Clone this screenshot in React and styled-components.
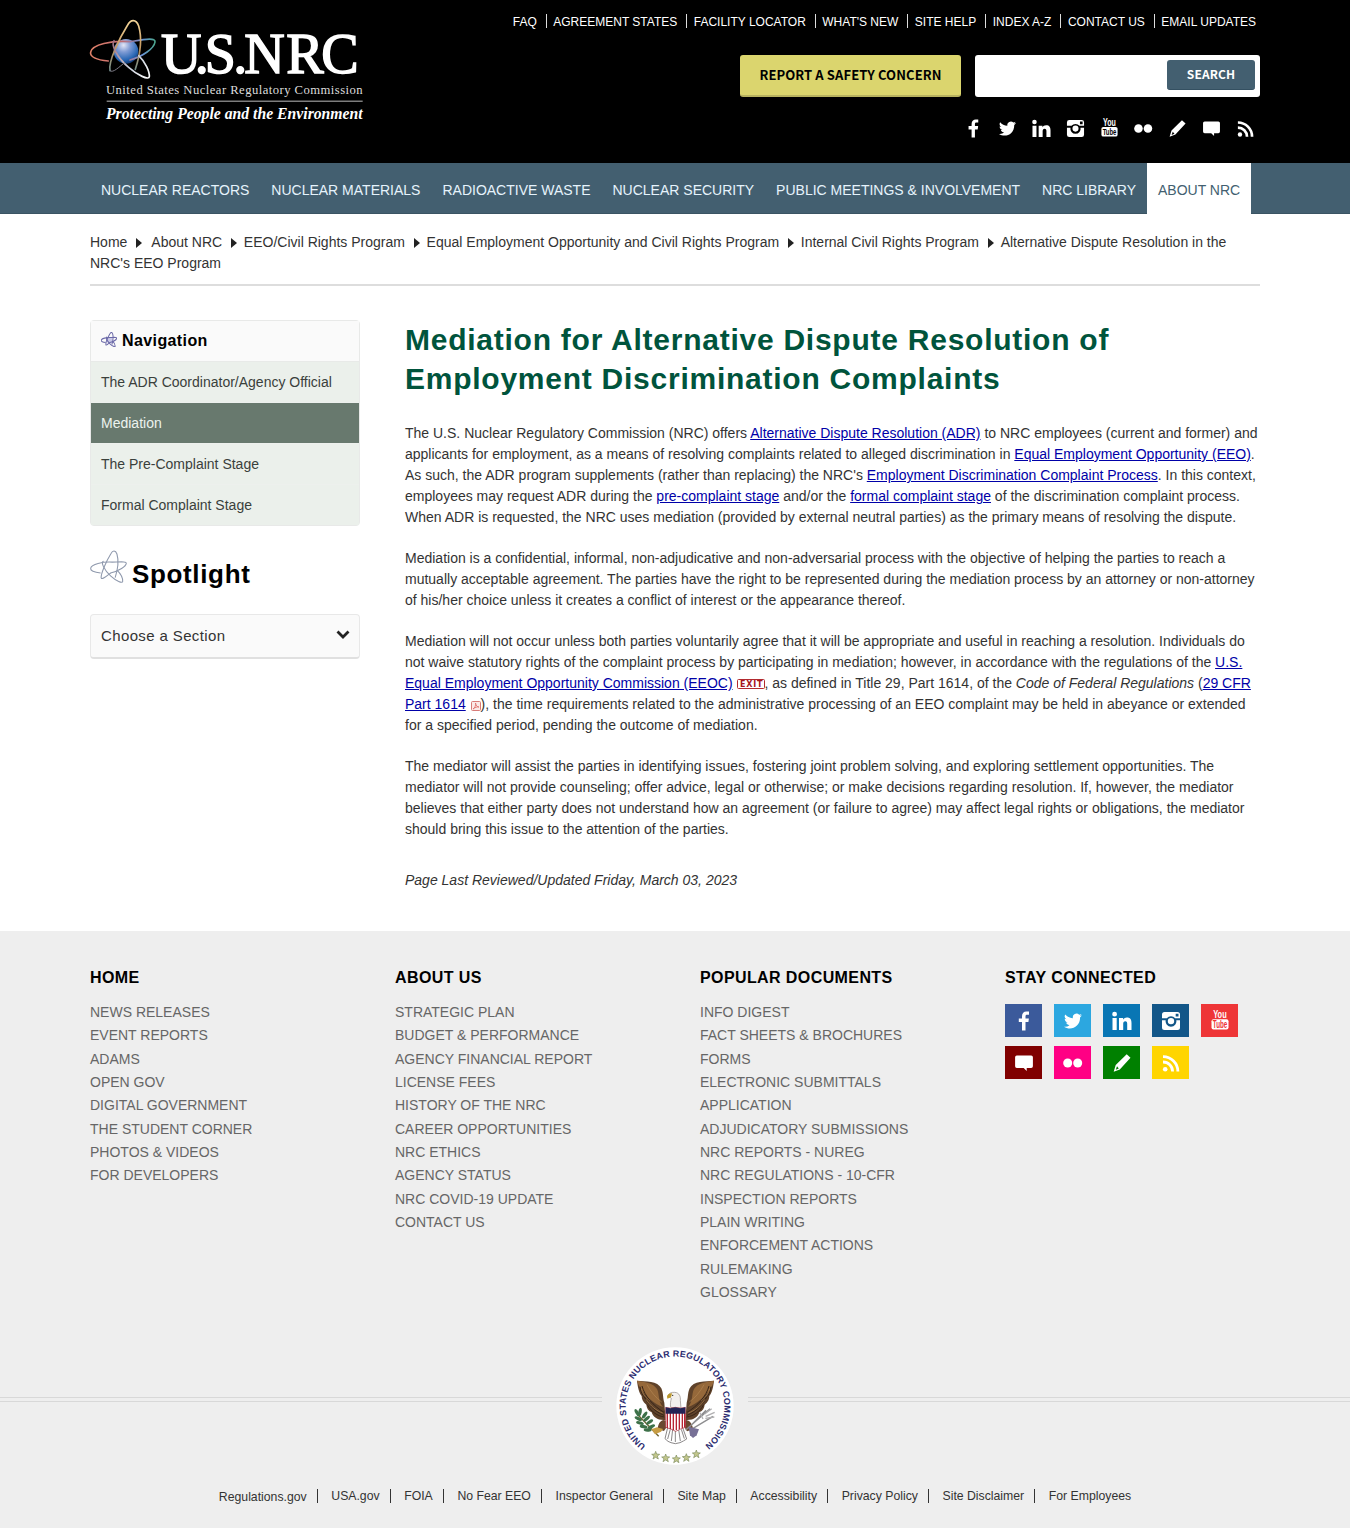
import React, { useId } from "react";
import styled, { createGlobalStyle } from "styled-components";

const GlobalStyle = createGlobalStyle`
  * { box-sizing: border-box; }
  body { margin: 0; background: #fff; color: #333; font: 14px/21px "Liberation Sans", Arial, sans-serif; }
  ul { list-style: none; margin: 0; padding: 0; }
  a { color: inherit; text-decoration: none; }
  svg { display: block; }
`;

const Container = styled.div`
  width: 1170px;
  margin: 0 auto;
`;

/* ---------- header ---------- */

const Header = styled.header`
  background: #000;
  height: 163px;
`;

const HeaderInner = styled(Container)`
  display: flex;
  justify-content: space-between;
`;

const LogoLink = styled.a`
  margin: 10px 0 0 -10px;
`;

const HeaderTools = styled.div`
  display: flex;
  flex-direction: column;
  align-items: flex-end;
`;

const UtilityNav = styled.ul`
  display: flex;
  padding: 14px 4px 0 0;
  color: #fff;
  font-size: 12px;
  line-height: 16px;
`;

const UtilityItem = styled.li`
  display: flex;
  white-space: nowrap;
  &:not(:last-child)::after {
    content: "";
    width: 1px;
    height: 14px;
    margin: 0 6.500px 0 9px;
    background: #ddd;
  }
`;

const ActionRow = styled.div`
  display: flex;
  gap: 14px;
  margin-top: 25px;
`;

const ReportButton = styled.a`
  width: 221px;
  height: 42px;
  border-radius: 3px;
  border-bottom: 2px solid #b7b25f;
  background: #dbd56e;
  color: #000;
  font: 700 13px/40px "Noto Sans CJK SC", sans-serif;
  letter-spacing: 0.1px;
  text-align: center;
  white-space: nowrap;
`;

const SearchBox = styled.form`
  display: flex;
  width: 285px;
  height: 42px;
  padding: 5px;
  border-radius: 3px;
  background: #fff;
`;

const SearchInput = styled.input`
  flex: 1;
  min-width: 0;
  border: 0;
  outline: 0;
  background: transparent;
`;

const SearchButton = styled.button`
  width: 88px;
  height: 30px;
  padding: 0 0 2px;
  border: 0;
  border-bottom: 1px solid #345061;
  border-radius: 3px;
  background: #435f70;
  color: #fff;
  font: 700 12px/27px "Noto Sans CJK SC", sans-serif;
  letter-spacing: 0.1px;
`;

const HeaderSocial = styled.div`
  display: flex;
  margin: 19px -2px 0 0;
`;

const HeaderSocialLink = styled.a`
  display: grid;
  place-items: center;
  width: 34px;
  height: 24px;
  color: #fff;
`;

/* ---------- main navigation ---------- */

const MainNav = styled.nav`
  height: 51px;
  background: #435f70;
  border-bottom: 1px solid #3a5463;
`;

const MainNavList = styled(Container).attrs({ as: "ul" })`
  display: flex;
`;

const MainNavLink = styled.a`
  display: block;
  height: 51px;
  padding: 0 11px;
  line-height: 54px;
  white-space: nowrap;
  color: ${(p) => (p.$active ? "#435f70" : "#e6f3fc")};
  background: ${(p) => (p.$active ? "#fff" : "transparent")};
`;

const Breadcrumb = styled(Container)`
  height: 72px;
  padding-top: 18px;
  border-bottom: 2px solid #ddd;
`;

const CrumbArrow = styled.span`
  display: inline-block;
  width: ${(p) => p.$width || 21.7}px;
  padding-left: 8.600px;
  svg { display: inline-block; vertical-align: -1px; }
`;

/* ---------- page body ---------- */

const Body = styled(Container)`
  display: flex;
  align-items: flex-start;
  gap: 45px;
  height: 645px;
  padding-top: 34px;
`;

const Sidebar = styled.aside`
  width: 270px;
`;

const SideMenu = styled.nav`
  border: 1px solid #e8e9e8;
  border-radius: 4px;
  background: #ebf0eb;
`;

const SideTitle = styled.h2`
  display: flex;
  gap: 5px;
  height: 41px;
  margin: 0;
  padding: 11px 10px 0;
  border-bottom: 1px solid #e8eae8;
  background: #fafafa;
  color: #000;
  font-size: 16px;
  line-height: 18px;
  letter-spacing: 0.025em;
`;

const SideLink = styled.a`
  display: block;
  height: 41px;
  padding: 0 10px;
  line-height: 41px;
  color: ${(p) => (p.$active ? "#ecf3ee" : "#3a403c")};
  background: ${(p) => (p.$active ? "#68796e" : "#ebf0eb")};
  border-bottom: 1px solid #edf0ed;
  &:last-child { height: 40px; border-bottom: 0; }
`;

const SpotlightTitle = styled.h2`
  display: flex;
  gap: 5px;
  height: 40px;
  margin: 24px 0 0;
  color: #000;
  font-size: 26px;
  line-height: 30px;
  letter-spacing: 0.025em;
  span { padding-top: 9px; }
`;

const SectionSelect = styled.button`
  display: flex;
  align-items: center;
  justify-content: space-between;
  width: 100%;
  height: 45px;
  margin-top: 24px;
  padding: 0 9px 2px 10px;
  border: 1px solid #e8e8e8;
  border-bottom: 2px solid #e0e0e0;
  border-radius: 4px;
  background: #fafafa;
  color: #333;
  font: 15px "Liberation Sans", Arial, sans-serif;
  letter-spacing: 0.025em;
`;

const Article = styled.main`
  width: 855px;
  p { margin: 0 0 20px; }
  p a { color: #0000a8; text-decoration: underline; }
`;

const PageTitle = styled.h1`
  margin: 0 0 25px;
  color: #00543c;
  font-size: 30px;
  line-height: 39px;
  letter-spacing: 0.025em;
`;

const Reviewed = styled.div`
  padding-top: 10px;
  font-style: italic;
`;

const ExitBadge = styled.span`
  display: inline-block;
  width: 27px;
  height: 10px;
  margin-left: 1px;
  vertical-align: -1px;
  svg { overflow: visible; }
`;

const PdfBadge = styled.span`
  display: inline-block;
  width: 10px;
  height: 10px;
  margin-left: 1px;
  vertical-align: -2px;
`;

/* ---------- footer ---------- */

const Footer = styled.footer`
  height: 597px;
  background: #eee;
`;

const FooterColumns = styled(Container)`
  display: grid;
  grid-template-columns: repeat(3, 305px) 255px;
  height: 417px;
  padding-top: 37px;
`;

const FooterHeading = styled.h3`
  margin: 0 0 13px;
  color: #000;
  font-size: 16px;
  line-height: 20px;
  letter-spacing: 0.025em;
`;

const FooterLink = styled.a`
  display: block;
  color: #666;
  line-height: 23.330px;
`;

const SocialGrid = styled.div`
  display: grid;
  grid-template-columns: repeat(5, 37px);
  gap: 9px 12px;
  margin-top: 16px;
`;

const SocialTile = styled.a`
  display: grid;
  place-items: center;
  height: 33px;
  color: #fff;
  background: ${(p) => p.$bg};
`;

const SealRow = styled.div`
  display: flex;
  align-items: flex-start;
  height: 116px;
`;

const Rule = styled.div`
  flex: 1;
  height: 5px;
  margin-top: 49px;
  border-top: 1px solid #d8d8d8;
  border-bottom: 1px solid #d8d8d8;
`;

const SealHolder = styled.div`
  width: 146px;
  min-width: 0;
  flex: 0 0 auto;
  svg { margin: -8px -11px 0 -13px; }
`;

const LegalList = styled.ul`
  display: flex;
  justify-content: center;
  margin-top: 24px;
  font-size: 12.250px;
  line-height: 16px;
`;

const LegalItem = styled.li`
  display: flex;
  white-space: nowrap;
  &:first-child a { padding-top: 1px; }
  &:not(:last-child)::after {
    content: "";
    width: 1px;
    height: 14px;
    margin: 1px 13.700px 0 9.900px;
    background: #333;
  }
`;

/* ---------- drawings ---------- */

function AtomOrbits({ stroke, width }) {
  return (
    <g fill="none" stroke={stroke} strokeWidth={width}>
      <path d="M85 153C48 150 27 140 30 126C34 104 95 90 150 93C195 92 229 88 228 100C226 116 190 142 140 153" />
      <path d="M88 180C86 155 118 85 143 45C152 28 168 26 176 48C187 85 180 135 166 178" />
      <path d="M102 88C84 90 102 134 142 170C172 197 207 212 208 200C209 184 196 156 176 137" />
      <path d="M88 180C94 192 125 165 142 152" />
    </g>
  );
}

function AtomIcon({ width, height, stroke, line, fill }) {
  return (
    <svg width={width} height={height} viewBox="26 26 206 182" preserveAspectRatio="none">
      {fill && <circle cx="137" cy="125" r="35" fill={fill} />}
      <AtomOrbits stroke={stroke} width={line} />
    </svg>
  );
}

function Logo() {
  return (
    <svg width="300" height="130" viewBox="0 0 900 390" fill="#fff" fontFamily="Liberation Serif, serif">
      <defs>
        <radialGradient id="core" cx="0.4" cy="0.25" r="0.8">
          <stop offset="0" stopColor="#e4e6f5" />
          <stop offset="0.35" stopColor="#7f9bd4" />
          <stop offset="0.75" stopColor="#2766b4" />
          <stop offset="1" stopColor="#0b2f66" />
        </radialGradient>
        <linearGradient id="orbitA">
          <stop offset="0" stopColor="#e08068" />
          <stop offset="0.5" stopColor="#c06a70" />
          <stop offset="0.8" stopColor="#6b93d8" />
          <stop offset="1" stopColor="#4ba58c" />
        </linearGradient>
        <linearGradient id="orbitB" x1="0" y1="1" x2="0" y2="0">
          <stop offset="0" stopColor="#6f8d8b" />
          <stop offset="0.45" stopColor="#c3965f" />
          <stop offset="1" stopColor="#f6d79a" />
        </linearGradient>
        <linearGradient id="orbitC" x1="0" y1="0" x2="1" y2="1">
          <stop offset="0" stopColor="#9d6a7c" />
          <stop offset="0.6" stopColor="#ccd3df" />
          <stop offset="1" stopColor="#fff" />
        </linearGradient>
      </defs>
      <circle cx="138" cy="124" r="37" fill="url(#core)" />
      <g fill="none" strokeWidth="5" strokeLinecap="round">
        <path d="M85 153C48 150 29 140 32 126C36 104 95 90 150 95C195 88 227 82 225 96C222 116 190 138 150 150" stroke="url(#orbitA)" />
        <path d="M90 182C84 155 118 85 143 45C152 28 168 26 176 48C187 85 180 135 166 178" stroke="url(#orbitB)" />
        <path d="M102 92C92 104 112 144 146 172C172 195 207 212 208 200C209 184 196 156 176 137" stroke="url(#orbitC)" />
        <path d="M90 182C98 192 120 168 134 158" stroke="#7d7a86" strokeWidth="3" />
      </g>
      <g stroke="#fff" strokeWidth="4.500">
        <text x="243 344 374 460 493 619 724" y="188" fontSize="168">U.S.NRC</text>
      </g>
      <text x="78" y="251" fontSize="38" fill="#ddd" textLength="770">United States Nuclear Regulatory Commission</text>
      <rect x="80" y="272" width="768" height="3" fill="#bbb" />
      <text x="78" y="326" fontSize="48" fontWeight="700" fontStyle="italic" textLength="770" lengthAdjust="spacingAndGlyphs">
        Protecting People and the Environment
      </text>
    </svg>
  );
}

const glyphs = {
  facebook: <path d="M8 19.500V11H4.800V7.400H8V5.200C8 2.200 9.800.5 12.400.5c1.300 0 2.300.1 2.600.1v3.200h-1.800c-1.400 0-1.700.7-1.700 1.600v2h3.400l-.5 3.600h-2.900v8.500z" />,
  twitter: <path d="M19 4.300c-.6.3-1.300.5-2.100.6.700-.5 1.300-1.200 1.600-2-.7.4-1.500.7-2.300.9a3.700 3.700 0 0 0-6.300 3.400C6.800 7 4.100 5.600 2.300 3.400a3.700 3.700 0 0 0 1.100 4.900c-.6 0-1.200-.2-1.700-.5 0 1.800 1.300 3.300 3 3.700-.6.1-1.100.2-1.700.1.500 1.500 1.800 2.500 3.500 2.600A7.500 7.500 0 0 1 1 15.700C7.800 20.100 17.200 16 17.100 6.300c.8-.5 1.400-1.200 1.900-2z" />,
  linkedin: <path d="M.5 7h4.200v12H.5zM2.600.8a2.400 2.400 0 1 1 0 4.800 2.400 2.400 0 0 1 0-4.800zM7 7h4v1.700c.6-1.100 2-2.100 3.900-2.100 3.500 0 4.600 2.100 4.600 5.400v7h-4.300v-6.200c0-1.500-.4-2.600-1.900-2.600s-2.100 1.100-2.100 2.600V19H7z" />,
  instagram: <path fillRule="evenodd" d="M3.500 1h13A2.500 2.500 0 0 1 19 3.500v13a2.500 2.500 0 0 1-2.500 2.500h-13A2.500 2.500 0 0 1 1 16.500v-13A2.500 2.500 0 0 1 3.500 1zM14.700 2.700v2.800h2.800V2.700zM1 7.200V9.200h3.700a5.400 5.400 0 1 0 10.600 0H19V7.200h-4.800a5.400 5.400 0 0 0-8.400 0zM10 6.900a3.200 3.200 0 1 1 0 6.400 3.200 3.200 0 0 1 0-6.400z" />,
  flickr: <><circle cx="4.700" cy="10" r="4.500" /><circle cx="14.700" cy="10" r="4.500" /></>,
  pencil: <path fillRule="evenodd" d="M14.700 1.300 18.500 4.800 7.800 16.400 1.700 18.700l2-6.600zM5 13.300l-1.200 3.500 3-1.400z" />,
  comment: <path d="M2.800 2.500h14.400a1.700 1.700 0 0 1 1.700 1.700v9a1.700 1.700 0 0 1-1.700 1.700h-4.500v3L9.700 14.900H2.800a1.700 1.700 0 0 1-1.700-1.700v-9a1.700 1.700 0 0 1 1.700-1.700z" />,
  rss: (
    <g fill="none" stroke="currentColor" strokeWidth="2.800">
      <circle cx="4.200" cy="16.300" r="2.300" fill="currentColor" stroke="none" />
      <path d="M2 9a9.600 9.600 0 0 1 9.600 9.600M2 3.700A14.900 14.900 0 0 1 16.900 18.600" />
    </g>
  ),
};

const StackedIcon = styled.svg`
  overflow: visible;
`;

function SocialIcon({ name, size = 20, bg }) {
  if (name === "youtube") {
    return (
      <StackedIcon width={size} height={size + 2} viewBox="0 0 20 22" fontFamily="Liberation Sans, Arial, sans-serif" fontWeight="700">
        <text x="3.200" y="8.400" fontSize="11.500" fill="currentColor" textLength="13.500" lengthAdjust="spacingAndGlyphs">You</text>
        <rect x="1.500" y="9.300" width="17" height="10.200" rx="2" fill="currentColor" />
        <text x="2.800" y="18" fontSize="10.500" fill={bg} textLength="14.500" lengthAdjust="spacingAndGlyphs">Tube</text>
      </StackedIcon>
    );
  }
  return <svg width={size} height={size} viewBox="0 0 20 20" fill="currentColor">{glyphs[name]}</svg>;
}

function Star({ x, y }) {
  return (
    <path
      transform={`translate(${x} ${y})`}
      d="M0-12 3-4l9 1-7 5 3 9-8-5-8 5 3-9-7-5 9-1z"
      fill="#c3c78c"
      stroke="#7d8c5e"
      strokeWidth="2"
    />
  );
}

function Wing() {
  return (
    <g>
      <path d="M142 122c26 2 62 0 73 23 7 16 4 29 9 43l4 52c-24 2-37-8-42-23-11-5-15-13-16-23-11-8-14-18-14-26-8-9-12-28-14-46z" fill="#5f422a" />
      <path d="M142 122c26 4 50 8 60 25 8 16 2 36 18 54-27-9-51-33-62-49-8-8-12-18-16-30z" fill="#95683a" />
      <path d="M157 138c8 30 34 60 66 79M151 140c4 22 10 32 28 42M163 168c10 24 34 48 60 58M173 194c12 22 30 34 51 37" fill="none" stroke="#382517" strokeWidth="3" />
      <path d="M172 134c12 22 26 39 44 52M155 146c5 19 13 27 25 36M169 178c13 20 31 34 50 41" fill="none" stroke="#b48651" strokeWidth="2" />
    </g>
  );
}

function Seal() {
  const arc = useId();
  const leaves = [[142, 218, 60], [151, 216, 100], [165, 225, 125], [146, 236, 25], [171, 236, 140], [151, 249, 15], [180, 246, 145], [162, 260, 10], [185, 260, 155], [174, 270, 5]];
  return (
    <svg width="170" height="130" viewBox="0 0 510 390">
      <defs>
        <path id={arc} d="M173 319A148 148 0 1 1 343 319" />
      </defs>
      <circle cx="258" cy="198" r="176" fill="#fff" />
      <text fontFamily="Liberation Sans, Arial, sans-serif" fontSize="26.500" fontWeight="700" fill="#2b2c70">
        <textPath href={`#${arc}`} textLength="740" startOffset="3">UNITED STATES NUCLEAR REGULATORY COMMISSION</textPath>
      </text>
      <g transform="translate(2 0)">
        <Wing />
        <g transform="translate(515 0) scale(-1 1)"><Wing /></g>
        <path d="M223 240c-13 1-18 15-19 27l19 6 17-25zM290 240c12 2 19 14 20 28l-18 6-17-27z" fill="#6a4930" />
        <path d="M234 263h45l12 34-10 6-10 5-14 3-13-3-9-4-9-8z" fill="#fff" stroke="#8b8889" strokeWidth="3" />
        <path d="m242 268-8 29m15-29-4 35m12-35v38m10-38 5 35m3-35 9 28" stroke="#8b8889" strokeWidth="3" />
        <path d="M243 202c-2-10 0-18 2-27l-10-7c2-8 10-12 20-11 15 1 18 14 17 24l2 24z" fill="#f2efed" stroke="#8f8883" strokeWidth="2" />
        <path d="M247 160c-8 0-13 4-15 9l1 7 11-4z" fill="#bc982c" />
        <circle cx="249" cy="166" r="2" fill="#222" />
        <path d="M228 202q14 5 29 0 16 5 30 0v60q-14 4-29 12-14-8-30-12z" fill="#fff" stroke="#a92332" strokeWidth="2" />
        <path d="M233 219v45m9-45v48m9-48v51m9-51v51m9-51v48m9-48v45m7-45v43" stroke="#b72534" strokeWidth="4" />
        <path d="M228 202q14 5 29 0 16 5 30 0v19h-59z" fill="#242455" />
        <path d="m143 223 64 66" stroke="#6d622f" strokeWidth="4" />
        {leaves.map(([x, y, r]) => (
          <ellipse key={`${x}-${y}`} cx={x} cy={y} rx="12" ry="5" transform={`rotate(${r} ${x} ${y})`} fill="#3d7149" />
        ))}
        <path d="m185 268 17-6 18 5-6 8-18 8z" fill="#c69c43" />
        <path d="M288 270 361 206M299 272 370 229M296 264 349 211" stroke="#8d8d8f" strokeWidth="4" />
        <path d="m345 222 21-16m-18 23 27-12m-28 18 27-4m-34 6-9-19" stroke="#b0afb1" strokeWidth="4" />
        <path d="m297 260 31 8-7 18-11 8-9-8z" fill="#777096" />
        {[[198, 346], [228, 354], [260, 357], [290, 353], [320, 342]].map(([x, y]) => <Star key={x} x={x} y={y} />)}
      </g>
    </svg>
  );
}

/* ---------- content ---------- */

const utilityLinks = ["FAQ", "AGREEMENT STATES", "FACILITY LOCATOR", "WHAT'S NEW", "SITE HELP", "INDEX A-Z", "CONTACT US", "EMAIL UPDATES"];
const headerSocial = ["facebook", "twitter", "linkedin", "instagram", "youtube", "flickr", "pencil", "comment", "rss"];
const mainLinks = ["NUCLEAR REACTORS", "NUCLEAR MATERIALS", "RADIOACTIVE WASTE", "NUCLEAR SECURITY", "PUBLIC MEETINGS & INVOLVEMENT", "NRC LIBRARY", "ABOUT NRC"];
const crumbs = ["Home", "About NRC", "EEO/Civil Rights Program", "Equal Employment Opportunity and Civil Rights Program", "Internal Civil Rights Program", "Alternative Dispute Resolution in the NRC's EEO Program"];
const sideLinks = ["The ADR Coordinator/Agency Official", "Mediation", "The Pre-Complaint Stage", "Formal Complaint Stage"];
const footerColumns = [
  ["HOME", ["NEWS RELEASES", "EVENT REPORTS", "ADAMS", "OPEN GOV", "DIGITAL GOVERNMENT", "THE STUDENT CORNER", "PHOTOS & VIDEOS", "FOR DEVELOPERS"]],
  ["ABOUT US", ["STRATEGIC PLAN", "BUDGET & PERFORMANCE", "AGENCY FINANCIAL REPORT", "LICENSE FEES", "HISTORY OF THE NRC", "CAREER OPPORTUNITIES", "NRC ETHICS", "AGENCY STATUS", "NRC COVID-19 UPDATE", "CONTACT US"]],
  ["POPULAR DOCUMENTS", ["INFO DIGEST", "FACT SHEETS & BROCHURES", "FORMS", "ELECTRONIC SUBMITTALS", "APPLICATION", "ADJUDICATORY SUBMISSIONS", "NRC REPORTS - NUREG", "NRC REGULATIONS - 10-CFR", "INSPECTION REPORTS", "PLAIN WRITING", "ENFORCEMENT ACTIONS", "RULEMAKING", "GLOSSARY"]],
];
const footerSocial = [
  ["facebook", "#3b5a9b"], ["twitter", "#2ca7e0"], ["linkedin", "#0976b4"], ["instagram", "#125688"], ["youtube", "#ee3537"],
  ["comment", "#800000"], ["flickr", "#ff0084"], ["pencil", "#008000"], ["rss", "#ffd500"],
];
const legalLinks = ["Regulations.gov", "USA.gov", "FOIA", "No Fear EEO", "Inspector General", "Site Map", "Accessibility", "Privacy Policy", "Site Disclaimer", "For Employees"];

export default function App() {
  return (
    <>
      <GlobalStyle />
      <Header>
        <HeaderInner>
          <LogoLink href="#"><Logo /></LogoLink>
          <HeaderTools>
            <UtilityNav>
              {utilityLinks.map((t) => <UtilityItem key={t}><a href="#">{t}</a></UtilityItem>)}
            </UtilityNav>
            <ActionRow>
              <ReportButton href="#">REPORT A SAFETY CONCERN</ReportButton>
              <SearchBox>
                <SearchInput aria-label="Search" />
                <SearchButton type="button">SEARCH</SearchButton>
              </SearchBox>
            </ActionRow>
            <HeaderSocial>
              {headerSocial.map((n) => (
                <HeaderSocialLink key={n} href="#"><SocialIcon name={n} size={19} bg="#000" /></HeaderSocialLink>
              ))}
            </HeaderSocial>
          </HeaderTools>
        </HeaderInner>
      </Header>

      <MainNav>
        <MainNavList>
          {mainLinks.map((t) => (
            <li key={t}><MainNavLink href="#" $active={t === "ABOUT NRC"}>{t}</MainNavLink></li>
          ))}
        </MainNavList>
      </MainNav>

      <Breadcrumb>
        {crumbs.map((t, i) => (
          <React.Fragment key={t}>
            {i > 0 && (
              <CrumbArrow $width={i === 1 ? 24 : undefined}>
                <svg width="6" height="10" viewBox="0 0 6 10"><path d="M0 0 6 5 0 10z" fill="#222" /></svg>
              </CrumbArrow>
            )}
            <a href="#">{t}</a>
          </React.Fragment>
        ))}
      </Breadcrumb>

      <Body>
        <Sidebar>
          <SideMenu>
            <SideTitle><AtomIcon width={16} height={15} stroke="#6b69a8" line={13} fill="#c9c8e6" />Navigation</SideTitle>
            {sideLinks.map((t) => <SideLink key={t} href="#" $active={t === "Mediation"}>{t}</SideLink>)}
          </SideMenu>
          <SpotlightTitle><AtomIcon width={37} height={33} stroke="#8f99ad" line={6} /><span>Spotlight</span></SpotlightTitle>
          <SectionSelect>
            Choose a Section
            <svg width="14" height="10" viewBox="0 0 14 10"><path d="m1.500 1.500 5.500 5.500 5.500-5.500" fill="none" stroke="#222" strokeWidth="2.800" /></svg>
          </SectionSelect>
        </Sidebar>

        <Article>
          <PageTitle>Mediation for Alternative Dispute Resolution of Employment Discrimination Complaints</PageTitle>
          <p>
            The U.S. Nuclear Regulatory Commission (NRC) offers <a href="#">Alternative Dispute Resolution (ADR)</a> to NRC employees (current and former) and applicants for employment, as a means of resolving complaints related to alleged discrimination in <a href="#">Equal Employment Opportunity (EEO)</a>. As such, the ADR program supplements (rather than replacing) the NRC's <a href="#">Employment Discrimination Complaint Process</a>. In this context, employees may request ADR during the <a href="#">pre-complaint stage</a> and/or the <a href="#">formal complaint stage</a> of the discrimination complaint process. When ADR is requested, the NRC uses mediation (provided by external neutral parties) as the primary means of resolving the dispute.
          </p>
          <p>
            Mediation is a confidential, informal, non-adjudicative and non-adversarial process with the objective of helping the parties to reach a mutually acceptable agreement. The parties have the right to be represented during the mediation process by an attorney or non-attorney of his/her choice unless it creates a conflict of interest or the appearance thereof.
          </p>
          <p>
            Mediation will not occur unless both parties voluntarily agree that it will be appropriate and useful in reaching a resolution. Individuals do not waive statutory rights of the complaint process by participating in mediation; however, in accordance with the regulations of the <a href="#">U.S. Equal Employment Opportunity Commission (EEOC)</a>{" "}
            <ExitBadge>
              <svg width="28" height="10" viewBox="0 0 28 10">
                <rect x="0.500" y="0.500" width="27" height="9" rx="1" fill="#fff" stroke="#b22a2f" />
                <text x="3" y="7.900" fontFamily="DejaVu Sans, sans-serif" fontWeight="700" fontSize="8" fill="#a5151b" textLength="22.500">EXIT</text>
              </svg>
            </ExitBadge>
            , as defined in Title 29, Part 1614, of the <i>Code of Federal Regulations</i> (<a href="#">29 CFR Part 1614</a>{" "}
            <PdfBadge>
              <svg width="10" height="10" viewBox="0 0 10 10">
                <rect x="0.500" y="0.500" width="9" height="9" rx="1" fill="#fbe9e7" stroke="#d77b78" />
                <path d="M2 8c2-1 3-4 2.500-6 .5 3 2 4 3.500 4-2-.5-4 .5-6 2z" fill="none" stroke="#dd6b67" strokeWidth="0.800" />
              </svg>
            </PdfBadge>
            ), the time requirements related to the administrative processing of an EEO complaint may be held in abeyance or extended for a specified period, pending the outcome of mediation.
          </p>
          <p>
            The mediator will assist the parties in identifying issues, fostering joint problem solving, and exploring settlement opportunities. The mediator will not provide counseling; offer advice, legal or otherwise; or make decisions regarding resolution. If, however, the mediator believes that either party does not understand how an agreement (or failure to agree) may affect legal rights or obligations, the mediator should bring this issue to the attention of the parties.
          </p>
          <Reviewed>Page Last Reviewed/Updated Friday, March 03, 2023</Reviewed>
        </Article>
      </Body>

      <Footer>
        <FooterColumns>
          {footerColumns.map(([title, links]) => (
            <div key={title}>
              <FooterHeading>{title}</FooterHeading>
              {links.map((t) => <FooterLink key={t} href="#">{t}</FooterLink>)}
            </div>
          ))}
          <div>
            <FooterHeading>STAY CONNECTED</FooterHeading>
            <SocialGrid>
              {footerSocial.map(([n, bg]) => (
                <SocialTile key={n} href="#" $bg={bg}><SocialIcon name={n} bg={bg} /></SocialTile>
              ))}
            </SocialGrid>
          </div>
        </FooterColumns>
        <SealRow>
          <Rule />
          <SealHolder><Seal /></SealHolder>
          <Rule />
        </SealRow>
        <LegalList>
          {legalLinks.map((t) => <LegalItem key={t}><a href="#">{t}</a></LegalItem>)}
        </LegalList>
      </Footer>
    </>
  );
}
